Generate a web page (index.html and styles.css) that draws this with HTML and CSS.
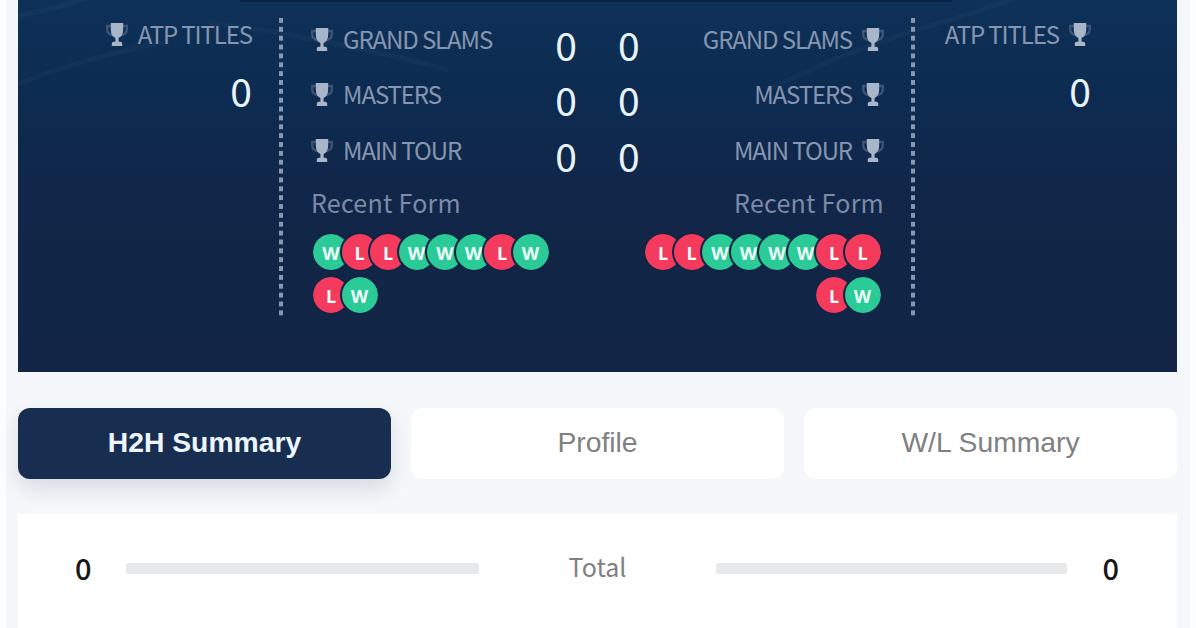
FILE: index.html
```html
<!DOCTYPE html>
<html lang="en">
    <head>
        <meta charset="UTF-8">
        <meta name="viewport" content="width=device-width, initial-scale=1.0">
        <title>H2H Summary</title>
        <link rel="stylesheet" href="styles.css">
    </head>
    <body>
        <!-- Trophy icon, used by every title label -->
        <svg class="icon-defs" width="0" height="0">
            <symbol id="trophy" viewBox="0 0 22 23">
                <path class="trophy-handles" d="M5 3H1.2v3c0 3.5 2.4 5.7 6 6.3M17 3h3.8v3c0 3.5-2.4 5.7-6 6.3"/>
                <path d="M4.8 0h12.4v6.5c0 4.4-1.7 7.4-4.6 8.4v3.9h1.6c1.2 0 2 .8 2 2V23H5.8v-2.2c0-1.2.8-2 2-2h1.6v-3.9c-2.9-1-4.6-4-4.6-8.4z"/>
            </symbol>
        </svg>

        <div class="page">
            <div class="players">
                <svg class="streaks" viewBox="0 0 1159 372">
                    <path d="M0 16Q40 8 76-4M0 84Q70 56 150 42M190 22Q320 40 430 70M750 90Q830 50 905 28T1000-4"/>
                </svg>

                <div class="titles">
                    <div class="label"><svg class="trophy"><use href="#trophy"/></svg><span>ATP TITLES</span></div>
                    <div class="count">0</div>
                </div>
                <div class="divider"></div>
                <div class="stats">
                    <div class="player">
                        <div class="row">
                            <div class="label"><svg class="trophy"><use href="#trophy"/></svg><span>GRAND SLAMS</span></div>
                            <div class="count">0</div>
                        </div>
                        <div class="row">
                            <div class="label"><svg class="trophy"><use href="#trophy"/></svg><span>MASTERS</span></div>
                            <div class="count">0</div>
                        </div>
                        <div class="row">
                            <div class="label"><svg class="trophy"><use href="#trophy"/></svg><span>MAIN TOUR</span></div>
                            <div class="count">0</div>
                        </div>
                        <div class="form-title">Recent Form</div>
                        <div class="form">
                            <span class="win">W</span><span class="loss">L</span><span class="loss">L</span><span class="win">W</span><span class="win">W</span><span class="win">W</span><span class="loss">L</span><span class="win">W</span>
                            <span class="loss">L</span><span class="win">W</span>
                        </div>
                    </div>
                    <div class="player right">
                        <div class="row">
                            <div class="label"><svg class="trophy"><use href="#trophy"/></svg><span>GRAND SLAMS</span></div>
                            <div class="count">0</div>
                        </div>
                        <div class="row">
                            <div class="label"><svg class="trophy"><use href="#trophy"/></svg><span>MASTERS</span></div>
                            <div class="count">0</div>
                        </div>
                        <div class="row">
                            <div class="label"><svg class="trophy"><use href="#trophy"/></svg><span>MAIN TOUR</span></div>
                            <div class="count">0</div>
                        </div>
                        <div class="form-title">Recent Form</div>
                        <div class="form">
                            <span class="loss">L</span><span class="loss">L</span><span class="win">W</span><span class="win">W</span><span class="win">W</span><span class="win">W</span><span class="loss">L</span><span class="loss">L</span>
                            <span class="loss">L</span><span class="win">W</span>
                        </div>
                    </div>
                </div>
                <div class="divider"></div>
                <div class="titles right">
                    <div class="label"><svg class="trophy"><use href="#trophy"/></svg><span>ATP TITLES</span></div>
                    <div class="count">0</div>
                </div>
            </div>

            <div class="tabs">
                <button class="tab active">H2H Summary</button>
                <button class="tab">Profile</button>
                <button class="tab">W/L Summary</button>
            </div>

            <div class="summary">
                <div class="total">0</div>
                <div class="bar"></div>
                <div class="total-label">Total</div>
                <div class="bar"></div>
                <div class="total last">0</div>
            </div>
        </div>
    </body>
</html>
```
FILE: styles.css
```css
* {
    box-sizing: border-box;
}

body {
    margin: 0;
    height: 628px;
    overflow: hidden;
    background-color: #fcfdff;
    font-family: "Noto Sans CJK SC", "Noto Sans", sans-serif;
}

.icon-defs {
    display: block;
}

.page {
    height: 628px;
    margin: 0 6px;
    padding: 0 13px 0 12px;
    background-color: #f5f7fa;
}

/* Dark panel with both players */
.players {
    position: relative;
    display: grid;
    grid-template-columns: 261px 4px 628px 4px 1fr;
    height: 372px;
    background: linear-gradient(#0e3157 0, #0d2b51 100px, #112648 200px, #122546 372px);
}

.players::before {
    content: "";
    position: absolute;
    left: 222px;
    top: 0;
    width: 712px;
    height: 2px;
    background-color: #082243;
}

.streaks {
    position: absolute;
    width: 100%;
    height: 100%;
    fill: none;
    stroke: #7396a8;
    stroke-width: 5;
    opacity: 0.05;
}

.titles {
    padding: 19px 27px 0 0;
}

.titles .label {
    justify-content: flex-end;
}

.titles .count {
    margin-top: 21px;
    text-align: right;
}

.titles.right {
    padding: 19px 86px 0 0;
}

.label {
    display: flex;
    gap: 10px;
    height: 30px;
    color: #8796b0;
    font-size: 24px;
    line-height: 29px;
    letter-spacing: -1.1px;
    white-space: nowrap;
}

.right .label {
    flex-direction: row-reverse;
    justify-content: flex-start;
}

.trophy {
    width: 22px;
    height: 23px;
    margin-top: 4px;
    fill: #a9b6ca;
}

.trophy-handles {
    fill: none;
    stroke: #7f91ab;
    stroke-width: 2.4;
    opacity: 0.4;
}

.count {
    color: #e9f4ff;
    font-size: 39px;
    line-height: 40px;
}

.divider {
    height: 300px;
    margin-top: 17px;
    background: linear-gradient(#8797b0 5px, transparent 5px) 0 1px / 5px 8.86px;
}

.stats {
    display: flex;
    justify-content: space-between;
    padding: 24px 27px 0 28px;
}

.player {
    width: 266px;
}

.row {
    display: flex;
    justify-content: space-between;
    height: 55.3px;
}

.right .row {
    flex-direction: row-reverse;
}

/* Recent results */
.form-title {
    color: #7c8ba7;
    font-size: 25px;
    line-height: 30px;
    letter-spacing: 0.25px;
    margin-top: -3px;
}

.right .form-title {
    text-align: right;
}

.form {
    display: flex;
    flex-wrap: wrap;
    row-gap: 3px;
    width: 252px;
    margin-top: 15px;
}

.right .form {
    justify-content: flex-end;
    margin-left: auto;
    padding-right: 13px;
}

.form span {
    width: 40px;
    height: 40px;
    margin-right: -11.5px;
    border: 2px solid #122546;
    border-radius: 50%;
    background-clip: padding-box;
    color: #effff9;
    font-family: "Open Sans", "Noto Sans", sans-serif;
    font-size: 18px;
    font-weight: bold;
    line-height: 38px;
    text-align: center;
}

.win {
    background-color: #2bcb98;
}

.loss {
    background-color: #f43b5e;
}

/* Tabs */
.tabs {
    display: grid;
    grid-template-columns: repeat(3, 1fr);
    gap: 20px;
    margin-top: 36px;
}

.tab {
    height: 71px;
    padding: 0 0 3px;
    border: none;
    border-radius: 12px;
    background-color: #fff;
    color: #808080;
    font-family: "Liberation Sans", Arial, sans-serif;
    font-size: 28.3px;
}

.tab.active {
    background-color: #182e50;
    color: #edf6ff;
    font-weight: bold;
    box-shadow: 0 10px 20px rgba(20, 45, 65, 0.13);
}

/* Totals */
.summary {
    display: grid;
    grid-template-columns: 52px 353px 237px 351px 52px;
    align-items: center;
    height: 114px;
    margin-top: 35px;
    padding: 0 57px 6px 56px;
    background-color: #fff;
}

.total {
    padding-bottom: 3px;
    padding-left: 1px;
    color: #171717;
    font-size: 29px;
    font-weight: 500;
}

.total.last {
    padding-left: 0;
    text-align: right;
}

.bar {
    height: 11px;
    border-radius: 2px;
    background-color: #e6e8ea;
}

.total-label {
    padding-bottom: 4px;
    color: #808080;
    font-size: 25px;
    text-align: center;
}
```
